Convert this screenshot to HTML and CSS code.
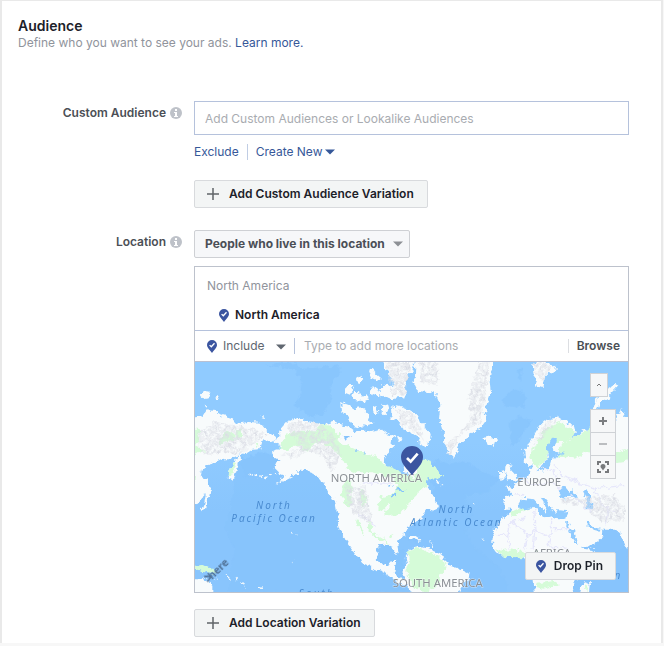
FILE: index.html
```html
<!DOCTYPE html>
<html lang="en">
<head>
<meta charset="utf-8">
<meta name="viewport" content="width=device-width, initial-scale=1">
<title>Audience</title>
<link rel="stylesheet" href="styles.css">
</head>
<body>
<svg class="defs" aria-hidden="true">
  <symbol id="pin" viewBox="0 0 10 13">
    <path fill="#3b55a0" d="M5 0a5 5 0 0 1 5 5c0 3-3.200 5-5 8C3.200 10 0 8 0 5a5 5 0 0 1 5-5z"/>
    <path fill="none" stroke="#fff" stroke-width="1.300" d="M2.600 5.100l1.700 1.700 3.200-3.500"/>
  </symbol>
  <symbol id="info" viewBox="0 0 12 12">
    <circle cx="6" cy="6" r="6" fill="#bec2c9"/>
    <path fill="#fff" d="M5 2h2v2H5zM4 5h3v4h1v1H4V9h1V6H4z"/>
  </symbol>
  <symbol id="plus" viewBox="0 0 12 12">
    <path stroke="#606468" stroke-width="1.500" d="M6 0v12M0 6h12"/>
  </symbol>
  <symbol id="caret" viewBox="0 0 10 6">
    <path fill="currentColor" d="M0 .5h10L5 5.500z"/>
  </symbol>
</svg>
<main class="panel">
  <header class="intro">
    <h1>Audience</h1>
    <p>Define who you want to see your ads. <a href="#">Learn more.</a></p>
  </header>
  <form class="form">
    <div class="label"><label for="custom">Custom Audience</label><svg class="info"><use href="#info"/></svg></div>
    <div class="field">
      <input class="custom" id="custom" type="text" placeholder="Add Custom Audiences or Lookalike Audiences">
      <div class="links">
        <a href="#">Exclude</a>
        <a class="create" href="#">Create New<svg class="caret"><use href="#caret"/></svg></a>
      </div>
      <button class="button" type="button"><svg class="plus"><use href="#plus"/></svg>Add Custom Audience Variation</button>
    </div>

    <div class="label"><label for="scope">Location</label><svg class="info"><use href="#info"/></svg></div>
    <div class="field">
      <div class="scope">
        <select id="scope"><option>People who live in this location</option></select>
        <svg class="caret"><use href="#caret"/></svg>
      </div>
      <section class="locations">
        <div class="chosen">
          <div class="region">North America</div>
          <div class="place"><svg class="pin"><use href="#pin"/></svg>North America</div>
        </div>
        <div class="search">
          <div class="mode">
            <svg class="pin"><use href="#pin"/></svg>
            <select aria-label="Include or exclude"><option>Include</option></select>
            <svg class="caret"><use href="#caret"/></svg>
          </div>
          <input type="text" aria-label="Locations" placeholder="Type to add more locations">
          <button class="browse" type="button">Browse</button>
        </div>
        <div class="map">
          <svg class="world" viewBox="0 0 1299 690" preserveAspectRatio="xMidYMid slice" role="img" aria-label="World map">
            <defs>
              <linearGradient id="sea" x1="0" y1="0" x2="0" y2="1">
                <stop offset=".35" stop-color="#90cbff"/>
                <stop offset=".65" stop-color="#89c5fd"/>
              </linearGradient>
              <filter id="coast" x="0" y="0" width="1299" height="690" filterUnits="userSpaceOnUse">
                <feTurbulence type="fractalNoise" baseFrequency=".06" numOctaves="3" seed="4" result="n"/>
                <feDisplacementMap in="SourceGraphic" in2="n" scale="22" xChannelSelector="R" yChannelSelector="G"/>
              </filter>
              <filter id="relief" x="0" y="0" width="1299" height="690" filterUnits="userSpaceOnUse" color-interpolation-filters="sRGB">
                <feTurbulence type="fractalNoise" baseFrequency=".09" numOctaves="3" seed="9" result="n"/>
                <feColorMatrix in="n" values="0 0 0 0 .86  0 0 0 0 .87  0 0 0 0 .9  2 0 0 0 -.6" result="g"/>
                <feComposite in="g" in2="SourceGraphic" operator="in"/>
              </filter>
            </defs>
            <rect width="1299" height="690" fill="url(#sea)"/>
            <g filter="url(#coast)" fill="#86c3fc">
              <path opacity=".7" d="M215 10l90-10 10 20 20 0 95-10 10 20-30 30-5 55-20 40-35 10-55-35 20-25 5-50-20-30z"/>
              <path opacity=".6" d="M130 290l80-15 70 20 100 5 30 60 20 90 100 70 100 50-10 60 20 60H100l20-130-30-60 20-80z"/>
              <path opacity=".7" d="M140 290l70-20 50 20-30 40-80 20zM925 115l20-25 35-8 10 30-5 25-55-5zM970 22l14-5-6 35-8-5zM945 180l25-15 40 10-20 30-25 35-20 10z"/>
              <path opacity=".7" d="M720 290l40 15 50-5 50 30 50 20-30 40-70 10 20 60-20 50 30 50 70 60 30 60-10 30H820l-10-70-110-70-60-40 10-80 70-60-20-50z"/>
              <path opacity=".7" d="M1160 610l80-10 60-60v150h-120z"/>
            </g>
            <g filter="url(#coast)">
              <g fill="#f8fbfc">
                <path d="M-20 165l45-5 10-15 35 3 10 14 33 10 12 13 35-5 35 2 10 13 15 15 20 15 3 10-16 7-22-7-5 10-5 17-25 2-15 10-20 13-5 20-7 25-10 27-12-5 2-27 8-20 13-15 12-15-25 12-25 0-20 10-23 5-20 15-6 24 18 12 6 25-16 25-20 20h-30z"/>
                <path d="M262 195l13-15 25-12 30 7 30 8 25 7 15-6 22-6 18 12 25 6 15 12 30-2 20 2 25-8 20 16 25 6-10 15 10 14-12 8-14 15-10 18 12 20 22 12 12 12 8 22 12 4 4-30-8-15 14-40 14-8 10 0 14 14 2 30-2 14 5 20 12 20 15 25 12 28 10 18-18 8-20-8-8 24-26 20-20 12-8 18-14 14-12 14 4 24-8 16-10-26-20-6-20 2-8 14 2 30 18 20 16-2 6-16 18-3-6 36 16 18 24 6 14 4-10 12-20-2-20-12-22-16-24-12-24-8-28-12-20-28-24-34-22-30-8-24-3-36-6-36-22-30-18-36-24-18-22-8-22-1-20 18-26 14-26 12 20-16 8-16-18-8-12-12 4-16 10-10-18-10-4-14 22-6 4-12-18-8z"/>
                <path d="M632 585l12-20 20-12 30 6 30 12 22 12 10 25 30 10 35 16-3 22-18 20-10 24H650l-22-44-8-34 16-16z"/>
                <path d="M662-20l-2 60-5 22 12 24 35 5 22 10 12 30-4 40 14 40 2 32 14 28 13 16 12-18 6-24 30-25 38-28 16-22-8-18 10-34 9-25-4-35 10-38v-40z"/>
                <path d="M865 228l16-4 26 3 2 13-18 12-14-8zM1012 10l18-16 32 10 24 16-22 12-14 14-8 32-12-4-14-36zM1262 66l8 6-28 32-24 16-14 28-14-2 12-38zM932 305l12-4 6 22 14 16 4 16-34 4 6-16-10-14zM915 330l14-4 3 18-16 10z"/>
                <path d="M985 265l18-20 18-30 16-27 24-20 26-4 20 14 30 12 6 22-18 5 3 14 22-10 14-16 34-6 32-8 24 4 12-34 12-22 8 26h30v425l-25-40-14-32-18-15-38 0 4 22-30 22-36 12 38 6-18 40-30 42-20 50H1020l-5-50-6-42-20-12-14-15-42 8-28-12-14-20 2-30 8-26 20-24 26-24 6-10-26 0 4-38 24-4-14-14-12-14 28 6 12-16 18-10 16-8 4-20 4-18-14 8-8-14z"/>
                <path d="M560-10h100l-8 40-14 16-8 28 2 32-46 6-14-8-16 2-2-20-4-12 18-6 26 4 4-14-18-20-14-24zM450 80l16-16 12 4-8 20-20 12zM486 48l14-10 2 16-12 12zM522 26l12-8 8 16 16 14-10 8-18-8zM470 98l10-14 10 8 12 10 16-6 6 14-16 8-30-4zM525 82l22-6 6 18 0 10-20-4zM436 126l12-4 16 6 14 14 20-4 14 12 16 18 4 16-18 12-18-4-16 6-16-20-8-18-18-12zM534 136l10-4 6 20-8 8zM562 130l14-4 4 14-10 20-10-8zM588 142l16-12 20 4 24 12 22 14 8 22 16 16 10 22-6 40-20-12-14-26-20-14-18-6-18-22-18-8zM602 226l20 0-6 20zM15 100l12-10 20 2-4 16-24 4zM57 104l10-2 6 8-8 2zM28 128l12 4-8 6zM195 163l14 0 2 5zM1155 700l4-32 26-8-4 40zM640 522l22 0 14 10-22 2z"/>
              </g>
              <g fill="#d5fbd8">
                <path d="M-10 200l20 0 6 26-16 24 30 15-50 30-20 35 40 12-8 60-32 20zM72 225l26-18 24 12-6 18-44 8zM112 300l10 6-12 34-10 0zM182 242l10 2-4 12zM120 205l18-2 0 20-12 4z"/>
                <path d="M280 214l40-8 40 2 16-18 30 0 30 28-10 24-36-8-30 12-24 24-20-20-20 2-20 14-24-10 12-20z"/>
                <path d="M385 250l30-20 40 20 55 25 30 10 30 24 34 16 36 18 18 6 10-34 14-22 20 0 20 30 20 18-20 12-24-6-4 24-28 24-18 18-8 20-24 20-22 0 10-20-20-10-24 24-10-4 4-36 36-10 20-22-16-26-60-18-50 0-26-10-18-34-24-24z"/>
                <path d="M440 365l26-8 12 22-14 14 6 30-8 14-24-34zM500 380l12 20 4 24-12 10-10-28zM480 470l12 10 20 40-24-24zM524 480l10 30 30 18 20 20-40-20-24-20zM582 520l10-4-6 16zM570 444l20-16 30 0-4 14-16 14-28 6z"/>
                <path d="M636 570l30-12 50 16 30 16 6 24-6 14-10 18-16 26-22 18-24-2-30-30-12-34 12-24zM1004 290l14-34 22-42 30-24 22-10 22 12 26 14-6 20-24 14-26 0-24 26-14 34-18 16-14-12-6-18zM1092 280l10-36 46-22 50-34 50-4 10 90-40 4-54-6-24 18-20-6-12 10zM1228 290l26-12 50-20v40l-40 6z"/>
                <path d="M945 450l30-14 30 4-28 8-26 18zM903 562l22 6 24-6 60 14 20-8v10l-50 8-56-2zM1025 662l50-8 20 12-50 14-24-6zM1170 672l10-4-8 24zM0 608l20-2 30 14 10 14-24-4-36-8z"/>
              </g>
              <g fill="#90cbff">
                <path d="M1050 296l8-20-2-22 14-22 16-4-4 14-10 18 14 14 24-6-18 12-22 10-6 20-12 16-14 4-10-8 14-8zM985 408l-16 26 20 8 30-4 10 14 20 14 22-6 14 12 26-2 6-26-28-2-6 10-14-8-8-20-16-20-8 0 20 34-4 14-12-12-24-28zM1092 404l4-22 14-8 10 12 12-4 14 22-24 0-14 6zM1164 390l14-6 12 14-6 14 8 18-2 12-12-2-2-24zM1113 484l8-2 16 30 14 34-6 0-18-28zM1172 474l10 6 16 18 20 2-8 6-18-4-18-18z"/>
                <path fill="#84c2fc" d="M600 384l16-4 16 6-18 4zM595 394l6-2-2 18-6-2zM580 370l14 2-6 6zM446 226l16-4 2 6-12 8zM480 264l12-4-8 10zM500 270l10 4-6 4z"/>
              </g>
              <g fill="none" stroke="#f8fbfc" stroke-width="4" stroke-dasharray="9 6">
                <path d="M310 300l-36 24-30 14-34 9-26-3-22-8"/>
                <path stroke-dasharray="none" stroke-width="9" d="M18 444l12-8 4-20 4-28 8-12"/>
                <path d="M292 508l12 12M600 511l30 6M645 526l16 2M708 535l4 20M62 646l8 6M90 638l16 14M118 648l8 8M142 662l8 14M192 680l12-3M728 356l14 16M292 598l4 4M862 535h8M832 423l6 4"/>
              </g>
              <path fill="#f8fbfc" d="M-20 652h40l8-10 8 16 16 10v30h-72z"/>
              <g fill="none" stroke="#e6e7fb" stroke-width="4">
                <path d="M500 363h90M900 520h38l10-40 44-14M950 480l50 36 20-12-4-60M938 520l4 40M1000 516l-10 44M1020 504l48 24 2-60M1070 500h60M1068 528l-8 30 60 4M1020 504l-6 56M960 395l28 4M985 345l20 20 32 4 30-10 30 24M1040 320l36 10 20 30M1080 310l20 30 60 20M1140 360l60 20 90-10M1200 380l20 50 40 20M1130 400l60 50M1240 440l-10 50M485 460l36 10 20 24"/>
              </g>
              <g filter="url(#relief)">
                <path d="M10 210l50-30 60 10 60 10 40 20-40 20-40 40-50-10-50 10-30-20zM280 180h90l20 20 30 30 20 50-30 50-30-50-40-10-50 20-30-10 50-20-10-30-20-20zM670-10h60v80l-50-10zM850 0h34l-10 90-16 90-60 40-30 60-20-30 40-30 40-50-10-60zM570-10h80l-20 110-40 0-10-50zM450 370l60 0 10 40 10 80-50-30-26-50zM1020-6l50 16-26 50-26-30zM1010 250l50-80 30 0-40 50zM1100 410l160-10 30 30 0 50-70 0-60-50-60-6zM600 140l50 10 30 50 10 40-30-30-40-20z"/>
              </g>
            </g>
            <g class="geo">
              <text x="407" y="361">NORTH AMERICA</text>
              <text x="967" y="371">EUROPE</text>
              <text x="1013" y="584">AFRICA</text>
              <text x="593" y="674">SOUTH AMERICA</text>
            </g>
            <g class="ocean">
              <text x="237" y="441">North</text>
              <text x="237" y="479">Pacific Ocean</text>
              <text x="784" y="452">North</text>
              <text x="784" y="491">Atlantic Ocean</text>
              <text x="365" y="705">South</text>
              <text x="1270" y="652">n</text>
            </g>
            <g transform="rotate(-44 66 626)"><path d="M26 612l16 14-20 4" fill="none" stroke="#52749a" stroke-width="5"/><text class="brand" x="36" y="637">here</text></g>
            <path fill="#3b55a0" d="M651 252a33 33 0 0 1 33 33c0 22-18 34-33 55-15-21-33-33-33-55a33 33 0 0 1 33-33z"/>
            <path fill="none" stroke="#fff" stroke-width="8" d="M636 288l11 11 21-24"/>
          </svg>
          <div class="controls">
            <button class="up" type="button" aria-label="Collapse"><svg viewBox="0 0 6 4"><path d="M1 3l2-2 2 2" fill="none" stroke="#777"/></svg></button>
            <div class="zoom">
              <button type="button" aria-label="Zoom in"><svg viewBox="0 0 14 14"><path stroke="#7b7d80" stroke-width="2" d="M7 3v8M3 7h8"/></svg></button>
              <button type="button" aria-label="Zoom out"><svg viewBox="0 0 14 14"><path stroke="#bbbdc0" stroke-width="2" d="M3 7h8"/></svg></button>
              <button type="button" aria-label="Fit to locations"><svg viewBox="0 0 14 14"><path fill="none" stroke="#77797c" stroke-width="2" d="M2 5V2h3M9 2h3v3M12 9v3H9M5 12H2V9"/><path fill="#77797c" d="M7 4a2.500 2.500 0 0 1 2.500 2.500c0 1.500-1.500 2-2.500 4-1-2-2.500-2.500-2.500-4A2.500 2.500 0 0 1 7 4z"/></svg></button>
            </div>
          </div>
          <button class="button drop" type="button"><svg class="pin"><use href="#pin"/></svg>Drop Pin</button>
        </div>
      </section>
      <button class="button" type="button"><svg class="plus"><use href="#plus"/></svg>Add Location Variation</button>
    </div>
  </form>
</main>
</body>
</html>
```
FILE: styles.css
```css
* { box-sizing: border-box; }
body {
  margin: 0;
  background: #f7f7f7;
  color: #1d2129;
  font: 12px/16px Inter, "Liberation Sans", sans-serif;
}
button, input, select { font: inherit; color: inherit; margin: 0; }
svg { display: block; flex: none; }
a { color: #365899; text-decoration: none; }
.defs { position: absolute; width: 0; height: 0; }

.panel {
  margin-right: 1px;
  padding: 17px 32px 6px 0;
  background: #fff;
  border: 2px solid #e9e9e9;
  border-width: 1px 2px 0;
}
.intro { padding-left: 16px; }
h1 { margin: 0; font-size: 14px; font-weight: 600; line-height: 16px; }
.intro p { margin: 0; color: #90949c; line-height: 18px; }

.form {
  display: grid;
  grid-template-columns: 180px minmax(0, 1fr);
  column-gap: 12px;
  row-gap: 22px;
  margin-top: 49px;
}
.label {
  display: flex;
  justify-content: flex-end;
  align-items: center;
  align-self: start;
  gap: 4px;
  padding-top: 4px;
  color: #4b4f56;
  font-weight: 600;
}
.info { width: 12px; height: 12px; }
.caret { width: 10px; height: 6px; }
.pin { width: 10px; height: 13px; }
.plus { width: 12px; height: 12px; }

.custom {
  display: block;
  width: 100%;
  height: 34px;
  padding: 0 10px;
  border: 1px solid #b5c2dc;
  background: #fff;
}
input::placeholder { color: #a9acb1; opacity: 1; }
.links { display: flex; margin: 9px 0 20px; }
.create {
  display: flex;
  align-items: center;
  gap: 3px;
  margin-left: 8px;
  padding-left: 8px;
  border-left: 1px solid #c0cde4;
}
.button {
  display: flex;
  align-items: center;
  gap: 10px;
  height: 28px;
  padding: 0 13px 0 12px;
  border: 1px solid #d8dadd;
  border-radius: 2px;
  background: #f3f5f5;
  font-weight: 600;
}

select { appearance: none; border: 0; background: none; outline: 0; }
.scope { position: relative; width: fit-content; color: #8d9095; }
.scope select {
  height: 28px;
  padding: 0 24px 0 10px;
  border: 1px solid #ced0d4;
  border-radius: 2px;
  background: #f6f7f9;
  color: #4b4f56;
  font-weight: 700;
}
.scope .caret { position: absolute; right: 7px; top: 11px; pointer-events: none; }

.locations { margin: 8px 0 16px; border: 1px solid #bdc2cc; }
.chosen { padding: 10px 12px 7px; border-bottom: 1px solid #b5c2dc; }
.region { line-height: 18px; color: #90949c; }
.place { display: flex; align-items: center; gap: 6px; margin-top: 12px; padding-left: 12px; font-weight: 600; }
.search { display: flex; align-items: center; height: 31px; border-bottom: 1px solid #b9c0d2; }
.search input { flex: 1; min-width: 0; height: 16px; padding: 0 9px; border: 0; border-left: 1px solid #b5c2dc; background: none; }
.mode { position: relative; display: flex; align-items: center; gap: 6px; padding-left: 12px; color: #606770; }
.mode select { width: 71px; padding: 0; }
.mode .caret { position: absolute; right: 8px; top: 6px; pointer-events: none; }
.browse { height: 14px; padding: 0 8px; border: 0; border-left: 1px solid #dcdee2; background: none; color: #4b4f56; font-weight: 600; line-height: 14px; }

.map { position: relative; overflow: hidden; }
.world { width: 100%; aspect-ratio: 433 / 230; }
.geo { fill: #8b9096; font: 34px "Noto Sans", sans-serif; stroke: #fff; stroke-width: 3px; stroke-opacity: .5; paint-order: stroke; }
.ocean { fill: #4a8bd0; font: italic 30px "Noto Sans", sans-serif; letter-spacing: 6px; text-anchor: middle; }
.brand { fill: #52749a; font: bold 32px "Noto Sans", sans-serif; }

.controls { position: absolute; top: 11px; right: 12px; }
.controls button { display: flex; align-items: center; justify-content: center; padding: 0; border: 1px solid #cfd2d6; background: #f6f7f8; }
.controls .up { width: 18px; height: 24px; }
.up svg { width: 6px; height: 4px; }
.zoom { margin-top: 12px; }
.zoom button { width: 26px; height: 24px; }
.zoom button + button { margin-top: -1px; }
.zoom svg { width: 14px; height: 14px; }
.drop { position: absolute; right: 12px; bottom: 12px; padding: 0 12px 0 10px; gap: 8px; }
```
